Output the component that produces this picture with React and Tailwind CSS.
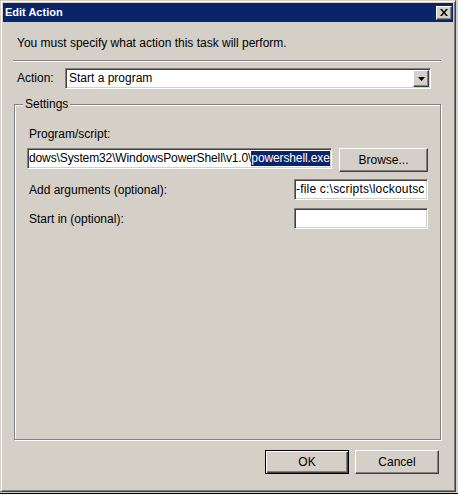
const sunken =
  'border border-t-[#808080] border-l-[#808080] border-r-white border-b-white bg-white shadow-[inset_1px_1px_0_#404040,inset_-1px_-1px_0_#d4d0c8]';
const raised =
  'border border-t-white border-l-white border-r-[#404040] border-b-[#404040] bg-[#d4d0c8] shadow-[inset_-1px_-1px_0_#808080]';

function CloseButton() {
  return (
    <div className={`flex h-[14px] w-[16px] items-center justify-center ${raised}`}>
      <svg width="8" height="7" viewBox="0 0 8 7">
        <path d="M0 0h2l2 2.5L6 0h2L5 3.5 8 7H6L4 4.5 2 7H0l3-3.5z" fill="#000" />
      </svg>
    </div>
  );
}

function Combo({ value }) {
  return (
    <div className={`flex h-[21px] w-[366px] items-stretch py-[1px] pr-[1px] ${sunken}`}>
      <div className="flex flex-1 items-center overflow-hidden whitespace-nowrap pl-[3px]">{value}</div>
      <div className={`flex w-[16px] items-center justify-center ${raised}`}>
        <svg width="7" height="4" viewBox="0 0 7 4">
          <path d="M0 0h7L3.5 4z" fill="#000" />
        </svg>
      </div>
    </div>
  );
}

export default function App() {
  return (
    <div className="flex h-[495px] w-[458px] flex-col overflow-hidden bg-[#d4d0c8] font-['Liberation_Sans',Arial,sans-serif] text-[12px] leading-[15px] text-black">
      <div className="flex">
        <div className="flex h-[492px] w-[456px] flex-col border border-t-[#d4d0c8] border-l-[#d4d0c8] border-r-[#404040] border-b-[#404040] bg-[#d4d0c8] p-[2px] shadow-[inset_1px_1px_0_#fff,inset_-1px_-1px_0_#808080]">
          {/* title bar */}
          <div className="flex h-[19px] shrink-0 items-center justify-between bg-[#0a246a] pl-[2px] pr-[1px]">
            <span className="text-[11px] font-bold text-white">Edit Action</span>
            <CloseButton />
          </div>

          <p className="mt-[14px] pl-[14px]">You must specify what action this task will perform.</p>

          <div className="ml-[10px] mt-[9px] h-[2px] w-[428px] border-t border-b border-t-[#808080] border-b-white" />

          <div className="mt-[6px] flex h-[21px] items-center">
            <span className="w-[62px] pl-[14px]">Action:</span>
            <Combo value="Start a program" />
          </div>

          <fieldset className="ml-[11px] mt-[8px] h-[343px] w-[427px] border border-[#808080] shadow-[inset_1px_1px_0_#fff,1px_1px_0_#fff]">
            <legend className="ml-[8px] bg-[#d4d0c8] px-[2px] leading-[15px]">Settings</legend>

            <div className="flex flex-col pl-[12px]">
              <span className="mt-[15px] pl-[2px]">Program/script:</span>

              <div className="mt-[6px] flex items-start gap-[7px]">
                <div className={`flex h-[21px] w-[305px] items-center overflow-hidden whitespace-nowrap pl-[1px] tracking-[-0.12px] ${sunken}`}>
                  <span>dows\System32\WindowsPowerShell\v1.0\</span>
                  <span className="bg-[#0a246a] text-white">powershell.exe</span>
                </div>
                <button className={`h-[24px] w-[89px] ${raised}`}>Browse...</button>
              </div>

              <div className="mt-[7px] flex w-[401px] items-center">
                <span className="flex-1 pl-[2px] pt-[2px]">Add arguments (optional):</span>
                <div className={`flex h-[21px] w-[134px] items-center overflow-hidden whitespace-nowrap pl-[1px] tracking-[0.2px] ${sunken}`}>
                  -file c:\scripts\lockoutsc
                </div>
              </div>

              <div className="mt-[8px] flex w-[401px] items-center">
                <span className="flex-1 pl-[2px] pt-[2px]">Start in (optional):</span>
                <div className={`h-[21px] w-[134px] ${sunken}`} />
              </div>
            </div>
          </fieldset>

          <div className="mt-[10px] flex justify-end gap-[6px] pr-[14px]">
            <button className="h-[24px] w-[84px] border border-black bg-[#d4d0c8] shadow-[inset_1px_1px_0_#fff,inset_-1px_-1px_0_#404040,inset_-2px_-2px_0_#808080]">
              OK
            </button>
            <button className={`h-[24px] w-[84px] ${raised}`}>Cancel</button>
          </div>
        </div>
        <div className="flex-1 bg-[#d4d0c8]" />
      </div>
      <div className="mt-[1px] h-[2px] border-t border-black bg-white" />
    </div>
  );
}
